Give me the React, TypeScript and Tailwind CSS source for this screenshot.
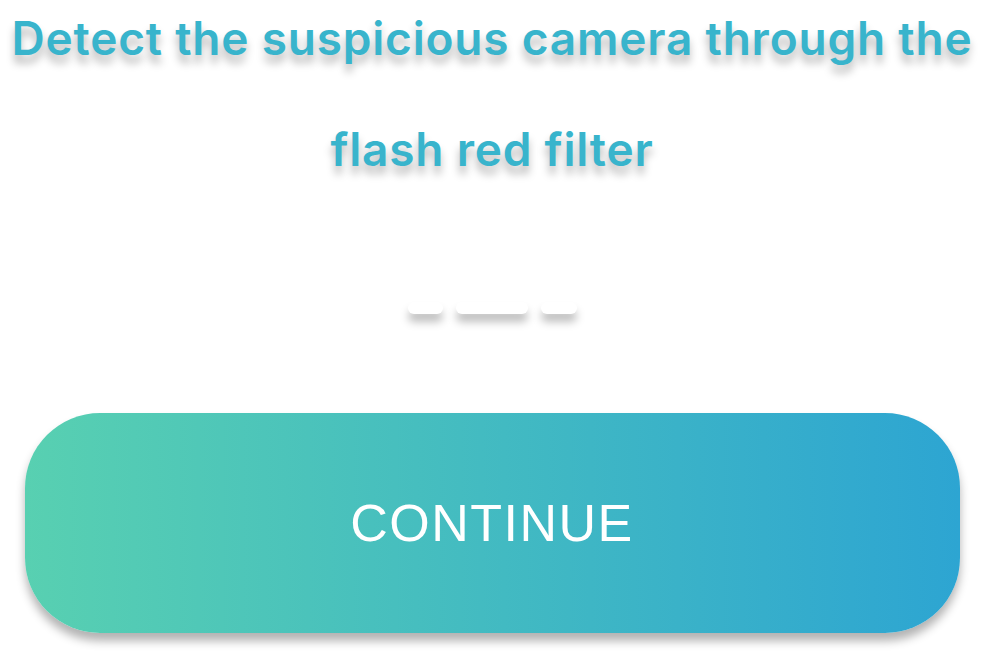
import React from "react";

export default function App() {
  return (
    <div className="w-[984px] h-[657px] bg-white overflow-hidden flex flex-col items-center" style={{ fontFamily: "Inter, 'Noto Sans', sans-serif" }}>
      <h1
        className="-mt-[17px] w-full text-center text-[46px] font-semibold leading-[111px] tracking-[0.8px] text-[#38b4cc] [text-shadow:0_8px_8px_rgba(0,0,0,0.28)]"
      >
        Detect the suspicious camera through the
        <br />
        flash red filter
      </h1>
      <div className="mt-[97px] flex gap-[13px]">
        <div className="w-[35px] h-[12px] rounded-[6px] bg-white shadow-[0_8px_8px_rgba(0,0,0,0.25)]" />
        <div className="w-[72px] h-[12px] rounded-[6px] bg-white shadow-[0_8px_8px_rgba(0,0,0,0.25)]" />
        <div className="w-[36px] h-[12px] rounded-[6px] bg-white shadow-[0_8px_8px_rgba(0,0,0,0.25)]" />
      </div>
      <button
        className="mt-[99px] w-[935px] h-[220px] rounded-[75px] flex items-center justify-center bg-[linear-gradient(to_right,#58d0b1,#2da5d2)] shadow-[0_8px_10px_rgba(0,0,0,0.3)] text-white text-[52px] tracking-[1.5px]"
        style={{ fontFamily: "'Liberation Sans', Arial, sans-serif" }}
      >
        CONTINUE
      </button>
    </div>
  );
}
